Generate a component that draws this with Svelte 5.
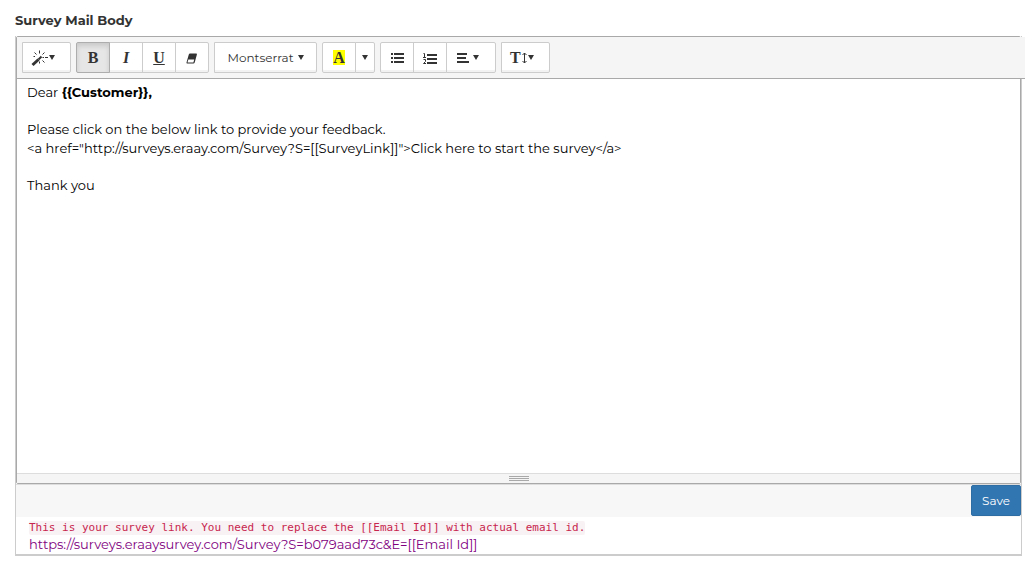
<script lang="ts">
	let bold = $state(true);
	let italic = $state(false);
	let underline = $state(false);

	const surveyUrl = "https://surveys.eraaysurvey.com/Survey?S=b079aad73c&E=[[Email Id]]";
	const anchorMarkup =
		'<a href="http://surveys.eraay.com/Survey?S=[[SurveyLink]]">Click here to start the survey</a>';
</script>

{#snippet caret()}
	<svg class="caret" width="6" height="5" viewBox="0 0 6 5" aria-hidden="true">
		<path d="M0 0h6L3 5z" />
	</svg>
{/snippet}

<main class="survey-mail">
	<h1 id="body-label">Survey Mail Body</h1>

	<section class="panel">
		<div class="editor">
			<div class="toolbar" role="toolbar" aria-label="Formatting">
				<div class="group">
					<button class="menu" type="button" aria-label="Style">
						<svg width="18" height="18" viewBox="0 0 18 18" aria-hidden="true">
							<path class="thick" d="M1.500 16L7.500 10.500" />
							<path class="medium" d="M7.500 10.500L10.500 7.500" />
							<path class="fine" d="M8.500 1.500v3M3.500 3.500l2 2M13.500 3.500l-2 2M2.500 7.500h1.500M11.500 8.500h1.500M14 8.500h3M11.500 11.500l2 2M8.500 12.500v2" />
						</svg>
						{@render caret()}
					</button>
				</div>

				<div class="group">
					<button class="glyph" class:active={bold} type="button" aria-label="Bold" aria-pressed={bold} onclick={() => (bold = !bold)}>B</button>
					<button class="glyph italic" class:active={italic} type="button" aria-label="Italic" aria-pressed={italic} onclick={() => (italic = !italic)}>I</button>
					<button class="glyph underline" class:active={underline} type="button" aria-label="Underline" aria-pressed={underline} onclick={() => (underline = !underline)}>U</button>
					<button type="button" aria-label="Remove font style">
						<svg width="12" height="12" viewBox="0 0 12 12" aria-hidden="true">
							<path d="M4 1.500H10.200q1 0 .7 1L8.700 10.500q-.3 1-1.300 1H1.200Q.2 11.500.5 10.500L2.800 2.500q.3-1 1.200-1z" />
							<path class="cutout" d="M2.300 7.500h5.900L7.400 10.500H1.500z" />
						</svg>
					</button>
				</div>

				<div class="group">
					<button class="font-name" type="button" aria-label="Font family">
						Montserrat {@render caret()}
					</button>
				</div>

				<div class="group">
					<button class="glyph" type="button" aria-label="Recent color"><span class="swatch">A</span></button>
					<button class="narrow" type="button" aria-label="More color">{@render caret()}</button>
				</div>

				<div class="group">
					<button type="button" aria-label="Unordered list">
						<svg width="14" height="12" viewBox="0 0 14 12" aria-hidden="true">
							<path d="M1 1h2v2H1zM1 5h2v2H1zM1 9h2v2H1zM4 1h10v2H4zM4 5h10v2H4zM4 9h10v2H4z" />
						</svg>
					</button>
					<button type="button" aria-label="Ordered list">
						<svg width="14" height="12" viewBox="0 0 14 12" aria-hidden="true">
							<path d="M4 2h10v2H4zM4 6h10v2H4zM4 10h10v2H4z" />
							<path class="fine" d="M.5 1.500h1v4M0 5.500h3M.5 7.500h2v2L.5 11.500h2.500" />
						</svg>
					</button>
					<button class="menu align" type="button" aria-label="Paragraph">
						<svg width="16" height="12" viewBox="0 0 16 12" aria-hidden="true">
							<path d="M2 1h10v2H2zM2 5h9v2H2zM2 9h12v2H2z" />
						</svg>
						{@render caret()}
					</button>
				</div>

				<div class="group">
					<button class="glyph menu" type="button" aria-label="Line height">
						T
						<svg width="7" height="12" viewBox="0 0 7 12" aria-hidden="true">
							<path class="fine" d="M3.500 1v10M1.500 3l2-2 2 2M1.500 9l2 2 2-2" />
						</svg>
						{@render caret()}
					</button>
				</div>
			</div>

			<div class="editable" contenteditable="true" role="textbox" aria-multiline="true" aria-labelledby="body-label" tabindex="0" spellcheck="false">
				<p>Dear <b>&#123;&#123;Customer&#125;&#125;,</b></p>
				<p>Please click on the below link to provide your feedback.<br />{anchorMarkup}</p>
				<p>Thank you</p>
			</div>

			<div class="resize-bar" aria-hidden="true">
				<span></span>
				<span></span>
				<span></span>
			</div>
		</div>

		<div class="actions">
			<button class="save" type="button">Save</button>
		</div>

		<div class="link-info">
			<code>This is your survey link. You need to replace the [[Email Id]] with actual email id.</code>
			<a href={surveyUrl}>{surveyUrl}</a>
		</div>
	</section>
</main>

<style>
	:global(body) {
		margin: 0;
		background: #fff;
	}

	.survey-mail {
		padding: 11px 11px 15px 15px;
		color: #333;
		font-family: Montserrat, Inter, "Open Sans", sans-serif;
		font-size: 13px;
		line-height: 19px;
	}

	h1 {
		margin: 0 0 6px;
		font-size: 13px;
		font-weight: 700;
		line-height: 19px;
	}

	.panel {
		border: 1px solid #ccc;
		border-top: 0;
		border-bottom-width: 2px;
	}

	.editor {
		border: 1px solid #a9a9a9;
		border-radius: 2px;
	}

	.toolbar {
		display: flex;
		flex-wrap: wrap;
		gap: 5px;
		margin-right: -5px;
		padding: 5px;
		border-bottom: 1px solid #a9a9a9;
		background: #f5f5f5;
	}

	.group {
		display: flex;
	}

	.group button {
		display: flex;
		align-items: center;
		justify-content: center;
		width: 34px;
		height: 31px;
		padding: 0;
		border: 1px solid #ccc;
		background: #fff;
		box-shadow: inset 0 -2px 0 rgba(0, 0, 0, 0.05);
		color: #333;
		font: inherit;
		font-size: 12px;
		cursor: pointer;
	}

	.group button + button {
		margin-left: -1px;
	}

	.group button:first-child {
		border-radius: 2px 0 0 2px;
	}

	.group button:last-child {
		border-radius: 0 2px 2px 0;
	}

	.group button.menu {
		justify-content: flex-start;
		width: 49px;
		padding-left: 8px;
	}

	.group button.align {
		gap: 2px;
		width: 50px;
	}

	.group button.narrow {
		width: 20px;
	}

	.group button.font-name {
		gap: 4px;
		width: 103px;
	}

	.group button.glyph {
		font-family: "Liberation Serif", serif;
		font-size: 16px;
		font-weight: 700;
	}

	.group button.italic {
		font-style: italic;
	}

	.group button.underline {
		text-decoration: underline;
	}

	.group button.active {
		z-index: 1;
		border-color: #adadad;
		background: #e6e6e6;
		box-shadow: inset 0 3px 5px rgba(0, 0, 0, 0.125);
	}

	.swatch {
		width: 12px;
		background: #ff0;
		line-height: 15px;
	}

	svg {
		flex: none;
		fill: currentColor;
	}

	.fine,
	.medium,
	.thick {
		fill: none;
		stroke: currentColor;
		stroke-width: 1;
	}

	.medium {
		stroke-width: 2;
	}

	.thick {
		stroke-width: 3;
	}

	.cutout {
		fill: #fff;
	}

	.editable {
		min-height: 386px;
		padding: 4px 10px;
		color: #000;
		outline: none;
	}

	.editable p {
		margin: 0 0 18px;
	}

	.resize-bar {
		display: flex;
		flex-direction: column;
		align-items: center;
		gap: 1px;
		padding: 2px 0;
		border-top: 1px solid #ddd;
		background: #f5f5f5;
	}

	.resize-bar span {
		width: 20px;
		height: 1px;
		background: #a9a9a9;
	}

	.actions {
		display: flex;
		justify-content: flex-end;
		padding-bottom: 1px;
		border-top: 1px solid #ddd;
		background: #f7f7f7;
	}

	.save {
		height: 31px;
		padding: 0 10px;
		border: 1px solid #2e6da4;
		border-radius: 2px;
		background: #3276b1;
		color: #fff;
		font: inherit;
		font-size: 12px;
		cursor: pointer;
	}

	.link-info {
		display: flex;
		flex-direction: column;
		align-items: flex-start;
		padding: 4px 13px 0;
	}

	.link-info code {
		border-radius: 2px;
		background: #f9f2f4;
		color: #c7254e;
		font-family: Consolas, "DejaVu Sans Mono", monospace;
		font-size: 11px;
		line-height: 14px;
	}

	.link-info a {
		color: #800080;
		text-decoration: none;
	}
</style>
